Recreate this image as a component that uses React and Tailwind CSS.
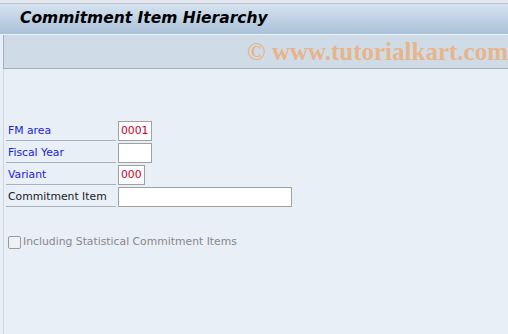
export default function App() {
  const rows = [
    { label: 'FM area', value: '0001', w: 'w-[34px]', blue: true },
    { label: 'Fiscal Year', value: '', w: 'w-[34px]', blue: true },
    { label: 'Variant', value: '000', w: 'w-[27px]', blue: true },
    { label: 'Commitment Item', value: '', w: 'w-[174px]', blue: false },
  ];

  return (
    <div className="w-[508px] h-[334px] overflow-hidden bg-[#e8eff7] font-['DejaVu_Sans',sans-serif] flex flex-col">
      <div className="h-[4px] bg-[#e4e8ee] border-b border-[#b8c4d0]" />
      <div className="h-[31px] bg-gradient-to-b from-[#d6e3ef] to-[#a9c1d8] border-b border-[#eef3f8] flex items-center pl-[20px]">
        <h1 className="text-[15.5px] font-bold italic text-black">Commitment Item Hierarchy</h1>
      </div>
      <div className="h-[34px] ml-[3px] bg-[#cfdce8] border-l border-b border-[#9fb0c2] flex items-center pl-[243px] overflow-hidden whitespace-nowrap">
        <span className="font-['Liberation_Serif',serif] font-bold text-[25px] text-[#e7b589]">© www.tutorialkart.com</span>
      </div>
      <div className="flex-1 ml-[3px] border-l border-[#d0d8e0] pt-[52px] pl-[2px]">
        <div className="flex flex-col gap-[2px]">
          {rows.map((r) => (
            <div key={r.label} className="flex items-end h-[20px]">
              <div
                className={`w-[110px] h-[20px] border-b border-[#a8b0b8] pl-[2px] pb-[1px] flex items-end whitespace-nowrap text-[10.8px] ${r.blue ? 'text-[#2020e0]' : 'text-[#1a1a1a]'}`}
              >
                {r.label}
              </div>
              <div className="w-[2px]" />
              <div
                className={`${r.w} h-[20px] bg-white border border-[#a0a0a0] text-[10.8px] text-[#c8001e] flex items-center pl-[2px]`}
              >
                {r.value}
              </div>
            </div>
          ))}
        </div>
        <div className="mt-[27px] flex items-center gap-[2px] pl-[2px]">
          <div className="w-[13px] h-[13px] border border-[#9a9a9a] rounded-[2px] bg-[#eef2f6]" />
          <span className="text-[10.8px] text-[#888888]">Including Statistical Commitment Items</span>
        </div>
      </div>
    </div>
  );
}
